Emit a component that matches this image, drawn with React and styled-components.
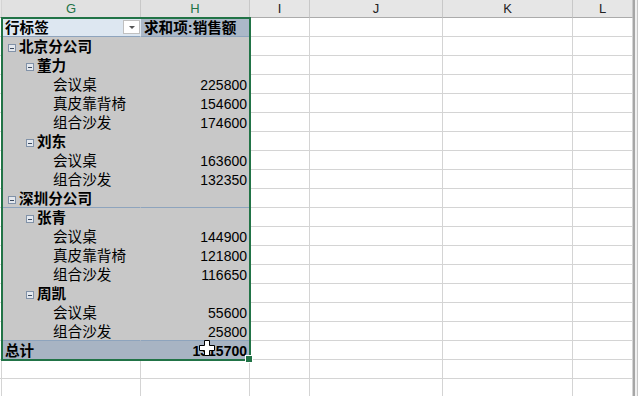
import React from 'react';
import styled, { createGlobalStyle } from 'styled-components';

const GlobalStyle = createGlobalStyle`
  html, body {
    margin: 0;
    padding: 0;
    background: #ffffff;
  }
  body {
    font-family: "Liberation Sans", "Noto Sans CJK SC", sans-serif;
  }
`;

// stub, G, H, I, J, K, L, edge
const COLS = '2px 139px 109px 60px 133px 130px 60px 5px';
const LETTERS = ['G', 'H', 'I', 'J', 'K', 'L'];

const ROWS = [
  { kind: 'head', label: '行标签', value: '求和项:销售额' },
  { kind: 'group', level: 0, label: '北京分公司' },
  { kind: 'group', level: 1, label: '董力' },
  { kind: 'item', label: '会议桌', value: '225800' },
  { kind: 'item', label: '真皮靠背椅', value: '154600' },
  { kind: 'item', label: '组合沙发', value: '174600' },
  { kind: 'group', level: 1, label: '刘东' },
  { kind: 'item', label: '会议桌', value: '163600' },
  { kind: 'item', label: '组合沙发', value: '132350' },
  { kind: 'group', level: 0, label: '深圳分公司', rule: true },
  { kind: 'group', level: 1, label: '张青' },
  { kind: 'item', label: '会议桌', value: '144900' },
  { kind: 'item', label: '真皮靠背椅', value: '121800' },
  { kind: 'item', label: '组合沙发', value: '116650' },
  { kind: 'group', level: 1, label: '周凯' },
  { kind: 'item', label: '会议桌', value: '55600' },
  { kind: 'item', label: '组合沙发', value: '25800', rule: true },
  { kind: 'total', label: '总计', value: '1315700' },
];

const EMPTY_ROWS = 2;

const FILL = {
  head: '#dde7f1',
  headValue: '#abb8c8',
  body: '#c8c8c8',
  total: '#a8b4c3',
};

const RULE = '#8ea4bd';

const Sheet = styled.div`
  position: relative;
  width: 638px;
  height: 396px;
  overflow: hidden;
  display: grid;
  grid-template-columns: ${COLS};
  grid-auto-rows: 19px;
  grid-template-rows: 18px;
  font-size: 14.6px;
  color: #000;
`;

const ColHead = styled.div`
  box-sizing: border-box;
  background: ${(p) => (p.$active ? '#e1e1e1' : '#e6e6e6')};
  border-right: 1px solid #c8c8c8;
  border-bottom: 1px solid #ababab;
  display: flex;
  align-items: center;
  justify-content: center;
  font-family: "Liberation Sans", sans-serif;
  font-size: 13px;
  color: ${(p) => (p.$active ? '#217346' : '#222')};
`;

const Stub = styled.div`
  box-sizing: border-box;
  background: ${(p) => (p.$head ? '#e6e6e6' : '#fff')};
  border-right: 1px solid #d4d4d4;
  border-bottom: 1px solid ${(p) => (p.$head ? '#ababab' : '#d4d4d4')};
`;

const Edge = styled.div`
  box-sizing: border-box;
  background: #f0f0f0;
  border-left: 2px solid #a6a6a6;
  border-right: 1px solid #c6c6c6;
`;

const Cell = styled.div`
  box-sizing: border-box;
  background: #fff;
  border-right: 1px solid #d4d4d4;
  border-bottom: 1px solid #d4d4d4;
`;

const PivotCell = styled.div`
  box-sizing: border-box;
  display: flex;
  align-items: center;
  gap: 3px;
  padding: 2px 2px 0 ${(p) => p.$pad || 0}px;
  background: ${(p) => p.$fill};
  border-right: 1px solid ${(p) => p.$fill};
  border-bottom: 1px solid ${(p) => (p.$rule ? RULE : p.$fill)};
  justify-content: ${(p) => (p.$right ? 'flex-end' : 'flex-start')};
  font-weight: ${(p) => (p.$bold ? 700 : 400)};
  white-space: nowrap;
  overflow: hidden;
`;

const Label = styled.span`
  flex: 1;
  line-height: 16px;
`;

const Number = styled.span`
  line-height: 16px;
  font-size: 14px;
`;

const Toggle = styled.span`
  box-sizing: border-box;
  width: 8px;
  height: 8px;
  margin-top: 2px;
  flex: none;
  border: 1px solid #8192a8;
  background: #e4e8ee;
  display: flex;
  align-items: center;
  justify-content: center;

  &::after {
    content: '';
    width: 4px;
    height: 1px;
    background: #3c4b60;
  }
`;

const FilterButton = styled.span`
  box-sizing: border-box;
  width: 17px;
  height: 14px;
  margin-top: -2px;
  flex: none;
  background: #fff;
  border: 1px solid #c0c0c0;
  display: flex;
  align-items: center;
  justify-content: center;

  &::after {
    content: '';
    border-left: 3px solid transparent;
    border-right: 3px solid transparent;
    border-top: 3px solid #555;
  }
`;

const Selection = styled.div`
  position: absolute;
  left: 1px;
  top: 17px;
  width: 250px;
  height: 344px;
  box-sizing: border-box;
  border: 2px solid #217346;
  pointer-events: none;
`;

const FillHandle = styled.div`
  position: absolute;
  left: 246px;
  top: 356px;
  width: 6px;
  height: 6px;
  background: #217346;
  outline: 1px solid #fff;
`;

const Cursor = styled.svg`
  position: absolute;
  left: 199px;
  top: 340px;
`;

function PivotRow({ row }) {
  if (row.kind === 'head') {
    return (
      <>
        <PivotCell $fill={FILL.head} $pad={3} $rule $bold style={{ paddingRight: 0 }}>
          <Label>{row.label}</Label>
          <FilterButton />
        </PivotCell>
        <PivotCell $fill={FILL.headValue} $pad={3} $rule $bold>
          <Label>{row.value}</Label>
        </PivotCell>
      </>
    );
  }
  if (row.kind === 'total') {
    return (
      <>
        <PivotCell $fill={FILL.total} $pad={3} $bold>
          <Label>{row.label}</Label>
        </PivotCell>
        <PivotCell $fill={FILL.total} $right $bold>
          <Number>{row.value}</Number>
        </PivotCell>
      </>
    );
  }
  if (row.kind === 'group') {
    return (
      <>
        <PivotCell $fill={FILL.body} $pad={6 + row.level * 18} $rule={row.rule} $bold>
          <Toggle />
          <Label>{row.label}</Label>
        </PivotCell>
        <PivotCell $fill={FILL.body} $rule={row.rule} />
      </>
    );
  }
  return (
    <>
      <PivotCell $fill={FILL.body} $pad={51} $rule={row.rule}>
        <Label>{row.label}</Label>
      </PivotCell>
      <PivotCell $fill={FILL.body} $right $rule={row.rule}>
        <Number>{row.value}</Number>
      </PivotCell>
    </>
  );
}

function BlankTail() {
  return (
    <>
      <Cell />
      <Cell />
      <Cell />
      <Cell />
      <Edge />
    </>
  );
}

export default function App() {
  return (
    <>
      <GlobalStyle />
      <Sheet>
        <Stub $head />
        {LETTERS.map((l, i) => (
          <ColHead key={l} $active={i < 2}>{l}</ColHead>
        ))}
        <Edge />

        {ROWS.map((row, i) => (
          <React.Fragment key={i}>
            <Stub />
            <PivotRow row={row} />
            <BlankTail />
          </React.Fragment>
        ))}

        {Array.from({ length: EMPTY_ROWS }).map((_, i) => (
          <React.Fragment key={'e' + i}>
            <Stub />
            <Cell />
            <Cell />
            <BlankTail />
          </React.Fragment>
        ))}

        <Selection />
        <FillHandle />
        <Cursor width="17" height="17" viewBox="0 0 17 17">
          <path
            d="M5.5 0.5h5v5h5v5h-5v5h-5v-5h-5v-5h5z"
            fill="#fff"
            stroke="#000"
            strokeWidth="1"
          />
        </Cursor>
      </Sheet>
    </>
  );
}
